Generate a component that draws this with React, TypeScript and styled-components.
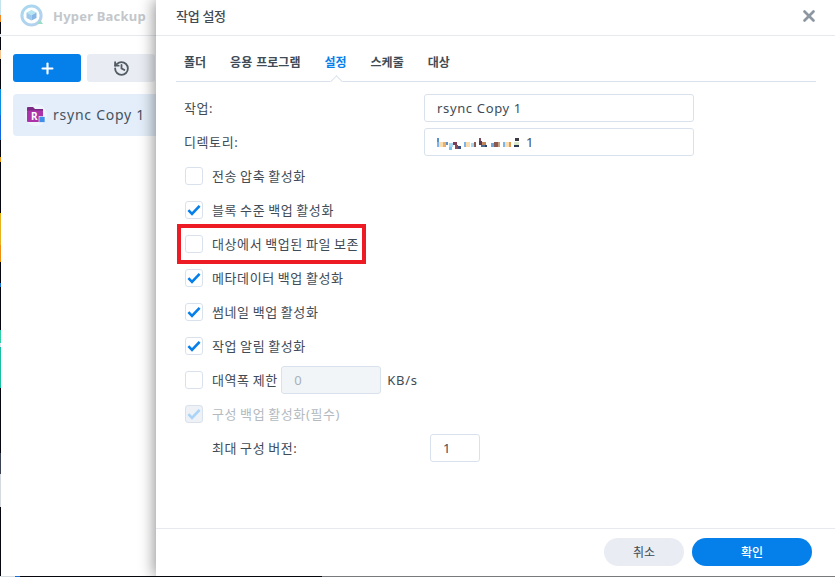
import React from 'react';
import styled, { createGlobalStyle, css } from 'styled-components';
import { History, Plus, X } from 'lucide-react';

const GlobalStyle = createGlobalStyle`
  html, body { margin: 0; padding: 0; background: #fff; overflow: hidden; }
  body { font-family: "Noto Sans", "Noto Sans CJK KR", sans-serif; color: #414b55; }
  * { box-sizing: border-box; }
`;

// korean form text in the reference sits wider than the font's own advance
const formText = css`
  font-size: 13px;
  letter-spacing: 0.6px;
  word-spacing: -1px;
  padding-bottom: 2px;
  white-space: nowrap;
`;

const Desktop = styled.div`
  width: 835px;
  height: 577px;
  display: flex;
  flex-direction: column;
`;

const DesktopRow = styled.div`
  flex: 1;
  display: flex;
  min-height: 0;
`;

const WallpaperEdge = styled.div`
  width: 1px;
  background: linear-gradient(
    to bottom,
    #c5e3ec 0 15px, #f08a2c 15px 22px, #05060f 22px 34px, #dfe6ee 34px 37px, #05060f 37px 50px,
    #f6c48e 50px 59px, #05060f 59px 89px, #0a8fe0 89px 115px, #1366dc 115px 140px, #05060f 140px 157px,
    #e8961e 157px 162px, #05060f 162px 213px, #e8b21c 213px 245px, #ee8f10 245px 262px, #05060f 262px 283px,
    #1a6fd0 283px 287px, #05060f 287px 330px, #2fd0a8 330px 343px, #dfe6ee 343px 347px, #18bfa0 347px 388px,
    #05060f 388px 453px, #3a4254 453px 474px, #d5dae0 474px 507px, #05060f 507px 577px
  );
`;

const AppWindow = styled.div`
  flex: 1;
  position: relative;
  background: #fff;
  border-bottom-left-radius: 3px;
  overflow: hidden;
`;

const WallpaperBottom = styled.div`
  height: 1px;
  background: linear-gradient(
    to right,
    #d8dde2 0 15px, #1a6fd0 15px 20px, #05070c 20px 322px, #777b7e 322px 835px
  );
`;

const AppHeader = styled.div`
  height: 36px;
  display: flex;
  align-items: center;
  gap: 10px;
  padding: 0 0 4px 19px;
  border-bottom: 1px solid #e6e9ed;
`;

const AppTitle = styled.div`
  font-size: 13px;
  font-weight: 700;
  letter-spacing: 0.2px;
  color: #c3c7cb;
`;

const AppBody = styled.div`
  padding: 18px 0 0 12px;
  display: flex;
  flex-direction: column;
  gap: 12px;
`;

const Toolbar = styled.div`
  display: flex;
  gap: 6px;
`;

const ToolButton = styled.div<{ $primary?: boolean }>`
  width: 68px;
  height: 28px;
  border-radius: 3px;
  display: flex;
  align-items: center;
  justify-content: center;
  background: ${({ $primary }) => ($primary ? '#0580eb' : '#e9edf3')};
  color: ${({ $primary }) => ($primary ? '#fff' : '#535c65')};
`;

const TaskItem = styled.div`
  width: 200px;
  height: 42px;
  border-radius: 4px;
  background: #e3eefa;
  display: flex;
  align-items: center;
  gap: 6px;
  padding-left: 12px;
`;

const TaskIconWrap = styled.div`
  width: 22px;
  height: 22px;
  border-radius: 50%;
  background: #eef4fb;
  display: flex;
  align-items: center;
  justify-content: center;
`;

const TaskName = styled.div`
  font-size: 14px;
  letter-spacing: 0.75px;
  color: #46525e;
  margin-top: -2px;
`;

const Dialog = styled.div`
  position: absolute;
  left: 155px;
  top: 0;
  right: 0;
  bottom: 0;
  background: #fff;
  display: flex;
  flex-direction: column;
  box-shadow: -2px 0 14px rgba(0, 0, 0, 0.42);
`;

const DialogHeader = styled.div`
  height: 36px;
  flex: none;
  display: flex;
  align-items: center;
  justify-content: space-between;
  padding: 0 20px 4px;
  border-bottom: 1px solid #e6e9ed;
`;

const DialogTitle = styled.div`
  font-size: 13px;
  font-weight: 500;
  letter-spacing: -0.3px;
  color: #414b55;
`;

const CloseButton = styled.div`
  display: flex;
  margin-right: -2.5px;
  color: #8d97a2;
`;

const DialogBody = styled.div`
  flex: 1;
  padding: 0 19px 0 20px;
`;

const Tabs = styled.div`
  height: 46px;
  display: flex;
  align-items: center;
  gap: 24px;
  padding: 6px 0 0 8px;
  border-bottom: 1px solid #d9e2ec;
  position: relative;
`;

const Tab = styled.div<{ $active?: boolean }>`
  font-size: 12px;
  font-weight: 700;
  word-spacing: 1px;
  color: ${({ $active }) => ($active ? '#057feb' : '#414b55')};
`;

const TabNotch = styled.div`
  position: absolute;
  left: 156px;
  bottom: -5px;
  width: 9px;
  height: 9px;
  background: #fff;
  border-left: 1px solid #d9e2ec;
  border-top: 1px solid #d9e2ec;
  transform: rotate(45deg);
`;

const Form = styled.div`
  display: flex;
  flex-direction: column;
  gap: 6px;
  padding: 12px 0 0 8px;
`;

const Row = styled.div`
  height: 28px;
  display: flex;
  align-items: center;
  position: relative;
`;

const Label = styled.div<{ $width?: number; $indent?: boolean }>`
  ${formText}
  color: #414b55;
  width: ${({ $width }) => ($width ? `${$width}px` : 'auto')};
  margin-left: ${({ $indent }) => ($indent ? '28px' : '0')};
  flex: none;
`;

const Input = styled.div<{ $width: number; $disabled?: boolean }>`
  width: ${({ $width }) => $width}px;
  height: 28px;
  flex: none;
  border: 1px solid #d9e2ec;
  border-radius: 3px;
  padding: 0 12px;
  display: flex;
  align-items: center;
  gap: 6px;
  font-size: 13px;
  letter-spacing: 0.65px;
  background: ${({ $disabled }) => ($disabled ? '#f2f5f8' : '#fff')};
  color: ${({ $disabled }) => ($disabled ? '#a8b0b8' : '#414b55')};
`;

const CheckRow = styled(Row)`
  padding-left: 1px;
`;

const CheckLabel = styled.div<{ $muted?: boolean }>`
  ${formText}
  color: ${({ $muted }) => ($muted ? '#b4bac0' : '#414b55')};
`;

const Box = styled.div<{ $muted?: boolean }>`
  width: 18px;
  height: 18px;
  flex: none;
  margin-right: 9px;
  border: 1px solid #d9e2ec;
  border-radius: 3px;
  display: flex;
  align-items: center;
  justify-content: center;
  background: ${({ $muted }) => ($muted ? '#eef1f5' : '#fff')};
`;

const BandwidthInput = styled(Input)`
  margin-left: 3.5px;
`;

const Unit = styled.div`
  font-size: 13px;
  letter-spacing: 0.7px;
  margin-left: 6px;
  color: #414b55;
`;

const Highlight = styled.div`
  position: absolute;
  left: -7px;
  top: -6px;
  width: 189px;
  height: 40px;
  border: 4px solid #ed1c24;
  pointer-events: none;
`;

const MosaicWrap = styled.div`
  display: flex;
  margin-top: 3px;
`;

const DialogFooter = styled.div`
  height: 48px;
  flex: none;
  border-top: 1px solid #e6e9ed;
  display: flex;
  justify-content: flex-end;
  gap: 8px;
  padding: 9px 23px 0 0;
`;

const FooterButton = styled.div<{ $primary?: boolean }>`
  width: ${({ $primary }) => ($primary ? '120px' : '80px')};
  height: 28px;
  border-radius: 14px;
  display: flex;
  align-items: center;
  justify-content: center;
  font-size: 12px;
  font-weight: ${({ $primary }) => ($primary ? 500 : 400)};
  background: ${({ $primary }) => ($primary ? '#0580eb' : '#e9edf3')};
  color: ${({ $primary }) => ($primary ? '#fff' : '#414b55')};
`;

const Check = ({ muted }: { muted?: boolean }) => (
  <svg width="14" height="12" viewBox="0 0 14 12">
    <path
      d="M1.4 6.2 L5 9.8 L12.6 1.8"
      fill="none"
      stroke={muted ? '#a9d3f7' : '#057feb'}
      strokeWidth="2.6"
    />
  </svg>
);

const Checkbox = ({ checked, muted }: { checked?: boolean; muted?: boolean }) => (
  <Box $muted={muted}>{checked && <Check muted={muted} />}</Box>
);

const AppLogo = () => (
  <svg width="23" height="23" viewBox="0 0 23 23">
    <defs>
      <linearGradient id="ring" x1="0" y1="0" x2="1" y2="1">
        <stop offset="0" stopColor="#a9d9ee" />
        <stop offset="1" stopColor="#b6cfee" />
      </linearGradient>
    </defs>
    <circle cx="11.5" cy="11.5" r="9.6" fill="#fff" stroke="url(#ring)" strokeWidth="3" />
    <path d="M17 20 L23 20 L20 16 Z" fill="#9adcc8" />
    <path d="M11.5 6 L16.5 8.6 L11.5 11.2 L6.5 8.6 Z" fill="#b5e6f2" />
    <path d="M6.5 8.6 L11.5 11.2 L11.5 16.6 L6.5 14 Z" fill="#9ec9ea" />
    <path d="M16.5 8.6 L11.5 11.2 L11.5 16.6 L16.5 14 Z" fill="#86b6e6" />
  </svg>
);

const FolderIcon = () => (
  <svg width="18" height="16" viewBox="0 0 18 16">
    <path d="M0 1 Q0 0 1 0 L6 0 L8 2 L16 2 L16 4 L0 4 Z" fill="#7b2a86" />
    <rect x="0" y="3.5" width="16" height="11.5" rx="1" fill="#ab32a8" />
    <text x="4" y="13" fontSize="10" fontWeight="700" fill="#fff" fontFamily="Noto Sans">R</text>
    <rect x="12" y="9.5" width="6" height="6" fill="#3d8fe8" stroke="#fff" strokeWidth="0.6" />
  </svg>
);

// blurred out path in the directory field, kept as a coarse mosaic
const mosaic: [number, number, number, number, string][] = [
  [0, 0, 2, 3, '#5a8fc8'], [0, 3, 2, 4, '#7cb6e8'], [2, 3, 3, 4, '#fbdcae'], [5, 3, 2, 4, '#e8b070'],
  [7, 3, 2, 2, '#5a8fc8'], [10, 4, 3, 3, '#a8d8f0'], [10, 7, 2, 2, '#7cc0ee'], [13, 3, 3, 2, '#7a3e58'],
  [15, 5, 2, 3, '#8a4a50'], [17, 6, 3, 2, '#3c4a78'], [22, 3, 2, 4, '#7cb6e8'], [24, 3, 3, 4, '#fbdcae'],
  [28, 4, 2, 3, '#a8d8f0'], [30, 3, 2, 4, '#8a5a50'], [34, 0, 2, 2, '#7a4a60'], [34, 2, 3, 3, '#5a3a50'],
  [37, 3, 3, 2, '#c0855a'], [36, 5, 3, 2, '#4a6a90'], [39, 5, 2, 2, '#2a4060'], [44, 4, 3, 3, '#6ea8d8'],
  [47, 3, 3, 4, '#8a5a50'], [50, 3, 2, 4, '#c8a080'], [54, 3, 2, 4, '#7cb6e8'], [56, 3, 3, 4, '#fbdcae'],
  [59, 3, 2, 4, '#e09a50'], [64, 0, 3, 2, '#3a3a40'], [63, 3, 4, 2, '#d8e8c8'], [63, 5, 4, 2, '#2a3a50'],
];

const Mosaic = () => (
  <MosaicWrap>
    <svg width="83" height="12" viewBox="0 0 68 9" preserveAspectRatio="none" shapeRendering="crispEdges">
      {mosaic.map(([x, y, w, h, c], i) => (
        <rect key={i} x={x} y={y} width={w} height={h} fill={c} />
      ))}
    </svg>
  </MosaicWrap>
);

const tabs = ['폴더', '응용 프로그램', '설정', '스케줄', '대상'];

export default function App() {
  return (
    <>
      <GlobalStyle />
      <Desktop>
        <DesktopRow>
          <WallpaperEdge />
          <AppWindow>
            <AppHeader>
              <AppLogo />
              <AppTitle>Hyper Backup</AppTitle>
            </AppHeader>
            <AppBody>
              <Toolbar>
                <ToolButton $primary>
                  <Plus size={17} strokeWidth={3} />
                </ToolButton>
                <ToolButton>
                  <History size={17} strokeWidth={2.6} />
                </ToolButton>
              </Toolbar>
              <TaskItem>
                <TaskIconWrap>
                  <FolderIcon />
                </TaskIconWrap>
                <TaskName>rsync Copy 1</TaskName>
              </TaskItem>
            </AppBody>

            <Dialog>
              <DialogHeader>
                <DialogTitle>작업 설정</DialogTitle>
                <CloseButton>
                  <X size={18} strokeWidth={3.6} />
                </CloseButton>
              </DialogHeader>
              <DialogBody>
                <Tabs>
                  {tabs.map((t) => (
                    <Tab key={t} $active={t === '설정'}>{t}</Tab>
                  ))}
                  <TabNotch />
                </Tabs>
                <Form>
                  <Row>
                    <Label $width={240}>작업:</Label>
                    <Input $width={270}>rsync Copy 1</Input>
                  </Row>
                  <Row>
                    <Label $width={240}>디렉토리:</Label>
                    <Input $width={270}>
                      <Mosaic />
                      <span>1</span>
                    </Input>
                  </Row>
                  <CheckRow>
                    <Checkbox />
                    <CheckLabel>전송 압축 활성화</CheckLabel>
                  </CheckRow>
                  <CheckRow>
                    <Checkbox checked />
                    <CheckLabel>블록 수준 백업 활성화</CheckLabel>
                  </CheckRow>
                  <CheckRow>
                    <Checkbox />
                    <CheckLabel>대상에서 백업된 파일 보존</CheckLabel>
                    <Highlight />
                  </CheckRow>
                  <CheckRow>
                    <Checkbox checked />
                    <CheckLabel>메타데이터 백업 활성화</CheckLabel>
                  </CheckRow>
                  <CheckRow>
                    <Checkbox checked />
                    <CheckLabel>썸네일 백업 활성화</CheckLabel>
                  </CheckRow>
                  <CheckRow>
                    <Checkbox checked />
                    <CheckLabel>작업 알림 활성화</CheckLabel>
                  </CheckRow>
                  <CheckRow>
                    <Checkbox />
                    <CheckLabel>대역폭 제한</CheckLabel>
                    <BandwidthInput $width={100} $disabled>0</BandwidthInput>
                    <Unit>KB/s</Unit>
                  </CheckRow>
                  <CheckRow>
                    <Checkbox checked muted />
                    <CheckLabel $muted>구성 백업 활성화(필수)</CheckLabel>
                  </CheckRow>
                  <Row>
                    <Label $width={218} $indent>최대 구성 버전:</Label>
                    <Input $width={50}>1</Input>
                  </Row>
                </Form>
              </DialogBody>
              <DialogFooter>
                <FooterButton>취소</FooterButton>
                <FooterButton $primary>확인</FooterButton>
              </DialogFooter>
            </Dialog>
          </AppWindow>
        </DesktopRow>
        <WallpaperBottom />
      </Desktop>
    </>
  );
}
